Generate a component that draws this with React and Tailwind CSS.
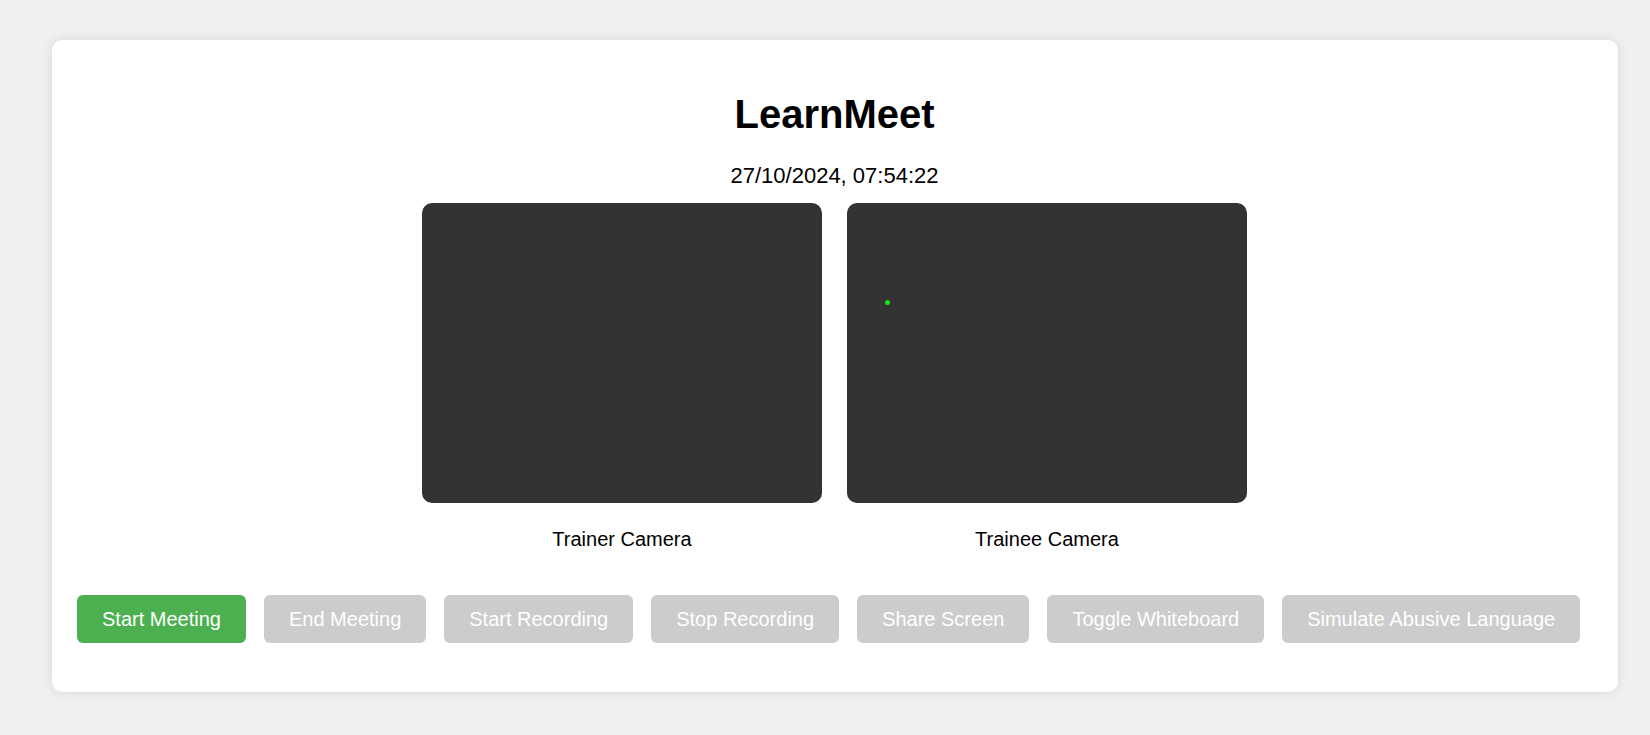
import { useState } from "react";

const buttons = [
  { label: "Start Meeting", active: true },
  { label: "End Meeting" },
  { label: "Start Recording" },
  { label: "Stop Recording" },
  { label: "Share Screen" },
  { label: "Toggle Whiteboard" },
  { label: "Simulate Abusive Language" },
];

/* ── camera tile ── */
function CameraTile({ label, dot }) {
  return (
    <div className="flex flex-col items-center w-[400px]">
      <div className="relative w-[400px] h-[300px] rounded-[10px] bg-[#333333]">
        {dot && (
          <span className="absolute left-[38px] top-[97px] w-[5px] h-[5px] rounded-full bg-[#14e614]" />
        )}
      </div>
      <p className="mt-[25px] text-[20px] leading-[23px] text-black">{label}</p>
    </div>
  );
}

export default function App() {
  const [time] = useState("27/10/2024, 07:54:22");

  return (
    <div
      className="min-h-screen bg-[#f0f0f0] pt-[40px] pl-[52px]"
      style={{ fontFamily: '"Liberation Sans", Arial, sans-serif' }}
    >
      <div className="w-[1566px] rounded-[10px] bg-white pt-[25px] pb-[49px] pl-[25px] pr-[26px] shadow-[0_0_12px_rgba(0,0,0,0.1)]">
        <h1 className="mt-[26px] text-center text-[40px] leading-[46px] font-bold text-black">LearnMeet</h1>
        <div className="mt-[26px] text-center text-[22px] leading-[25px] text-black">{time}</div>

        {/* cameras */}
        <div className="mt-[15px] flex justify-center gap-[25px]">
          <CameraTile label="Trainer Camera" />
          <CameraTile label="Trainee Camera" dot />
        </div>

        {/* controls */}
        <div className="mt-[44px] flex gap-[18px]">
          {buttons.map((b) => (
            <button
              key={b.label}
              className={`px-[25px] py-[12.5px] rounded-[6px] text-[20px] leading-[23px] text-white ${
                b.active ? "bg-[#4caf50]" : "bg-[#cccccc]"
              }`}
            >
              {b.label}
            </button>
          ))}
        </div>
      </div>
    </div>
  );
}
